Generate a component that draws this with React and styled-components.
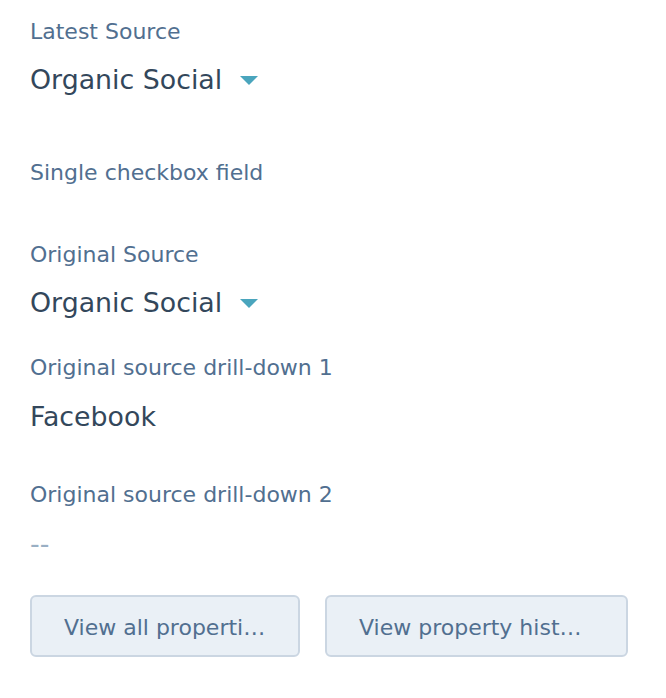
import React from 'react';
import styled, { createGlobalStyle } from 'styled-components';

const GlobalStyle = createGlobalStyle`
	body {
		margin: 0;
		background: #ffffff;
		font-family: 'DejaVu Sans', 'Liberation Sans', sans-serif;
	}
`;

const Panel = styled.div`
	display: flex;
	flex-direction: column;
	padding: 16px 30px 0 30px;
`;

const Field = styled.div`
	display: flex;
	flex-direction: column;
	gap: ${props => props.$gap || 11}px;
	margin-bottom: ${props => props.$space}px;
`;

const Label = styled.div`
	font-size: 22px;
	line-height: 32px;
	color: #516f90;
	white-space: nowrap;
`;

const Value = styled.div`
	display: flex;
	align-items: center;
	gap: 18px;
	height: 40px;
	font-size: 26.8px;
	color: ${props => (props.$empty ? '#99afc4' : '#33475b')};
`;

const Caret = styled.span`
	width: 0;
	height: 0;
	border-left: 9px solid transparent;
	border-right: 9px solid transparent;
	border-top: 9px solid #4aa5bd;
	margin-top: 2px;
`;

const Actions = styled.div`
	display: flex;
	gap: 25px;
`;

const Button = styled.button`
	width: ${props => props.$width}px;
	height: 62px;
	padding: 2px 32px 0;
	font-family: inherit;
	font-size: 22px;
	color: #516f90;
	background: #eaf0f6;
	border: 2px solid #cbd6e2;
	border-radius: 6px;
	white-space: nowrap;
	overflow: hidden;
	text-overflow: ellipsis;
	cursor: pointer;
`;

const fields = [
	{ label: 'Latest Source', value: 'Organic Social', dropdown: true, space: 58 },
	{ label: 'Single checkbox field', space: 50 },
	{ label: 'Original Source', value: 'Organic Social', dropdown: true, space: 30 },
	{ label: 'Original source drill-down 1', value: 'Facebook', gap: 12, space: 43 },
	{ label: 'Original source drill-down 2', value: '--', empty: true, gap: 12, space: 32 },
];

const App = () => {
	return (
		<>
			<GlobalStyle />
			<Panel>
				{fields.map((item, index) => (
					<Field key={index} $gap={item.gap} $space={item.space}>
						<Label>{item.label}</Label>
						{item.value && (
							<Value $empty={item.empty}>
								{item.value}
								{item.dropdown && <Caret />}
							</Value>
						)}
					</Field>
				))}
				<Actions>
					<Button $width={270}>View all properties</Button>
					<Button $width={303}>View property history</Button>
				</Actions>
			</Panel>
		</>
	);
};

export default App;
